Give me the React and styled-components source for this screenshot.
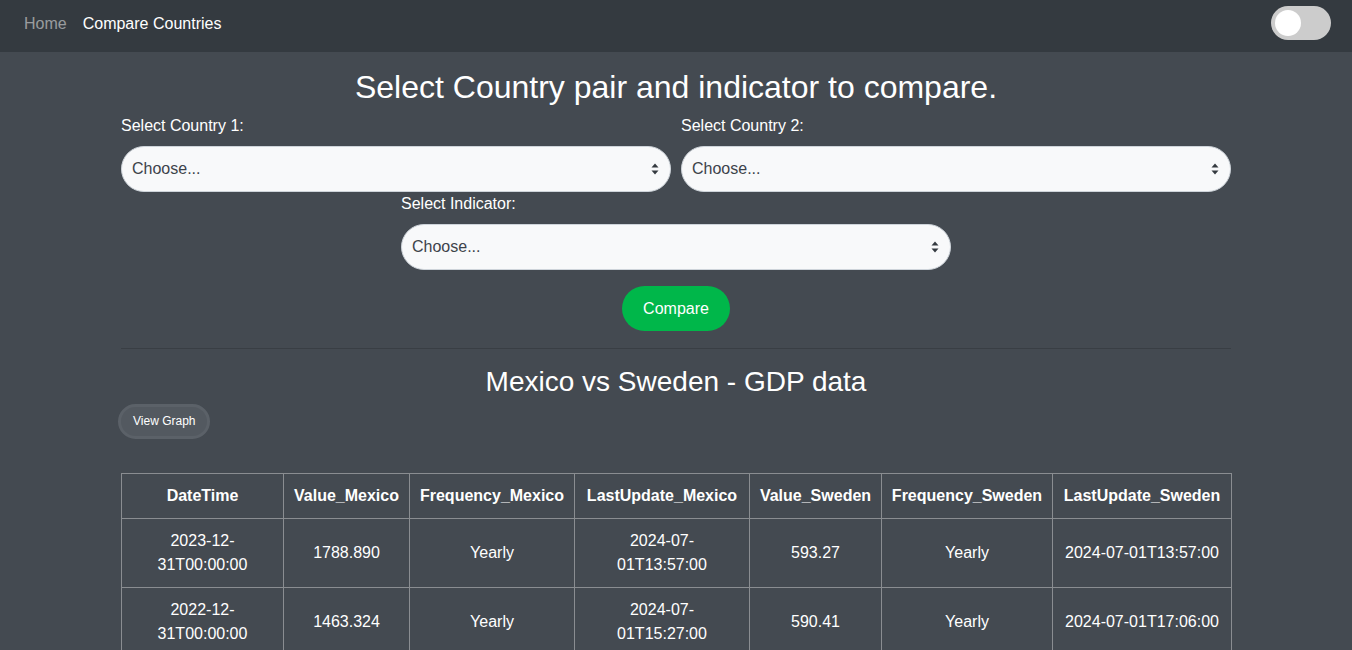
import styled, { createGlobalStyle } from "styled-components"

const GlobalStyle = createGlobalStyle`
    * {
        box-sizing: border-box;
    }

    body {
        margin: 0;
        background-color: #444a51;
        font-family: "Liberation Sans", Arial, sans-serif;
        color: #ffffff;
        font-size: 16px;
        line-height: 1.5;
    }
`

const Navbar = styled.nav`
    display: flex;
    justify-content: space-between;
    align-items: center;
    height: 52px;
    padding: 0 21px 6px 24px;
    background-color: #343a40;
`

const NavLinks = styled.div`
    display: flex;
    align-items: center;
    gap: 16px;
    padding-top: 2px;
`

const NavLink = styled.a`
    font-size: 16px;
    text-decoration: none;
    color: ${(p) => (p.$active ? "#ffffff" : "rgba(255, 255, 255, 0.5)")};
    cursor: pointer;
`

const Switch = styled.label`
    display: flex;
    align-items: center;
    width: 60px;
    height: 34px;
    padding: 4px;
    border-radius: 34px;
    background-color: #cccccc;
    cursor: pointer;

    &::before {
        content: "";
        width: 26px;
        height: 26px;
        border-radius: 50%;
        background-color: #ffffff;
    }
`

const Container = styled.main`
    width: 1110px;
    margin: 0 auto;
    padding-top: 16px;
`

const Title = styled.h1`
    margin: 0 0 ${(p) => p.$gap ?? 8}px;
    font-size: ${(p) => p.$size || 32}px;
    font-weight: 400;
    line-height: 1.2;
    text-align: center;
`

const FieldGrid = styled.div`
    display: grid;
    grid-template-columns: 1fr 1fr;
    column-gap: 10px;
`

const Field = styled.div`
    display: flex;
    flex-direction: column;
    width: ${(p) => (p.$width ? `${p.$width}px` : "auto")};
    margin: ${(p) => (p.$centered ? "0 auto" : "0")};
`

const Label = styled.label`
    margin-bottom: 8px;
    font-size: 16px;
`

const SelectWrap = styled.div`
    position: relative;
`

const Select = styled.select`
    width: 100%;
    height: 46px;
    padding: 0 36px 2px 10px;
    border: 1px solid #ced4da;
    border-radius: 23px;
    background-color: #f8f9fa;
    color: #3d434a;
    font-family: inherit;
    font-size: 16px;
    appearance: none;
    outline: none;
`

const SelectArrows = styled.svg`
    position: absolute;
    right: 12px;
    top: 50%;
    width: 8px;
    height: 12px;
    transform: translateY(-50%);
    pointer-events: none;
`

const ButtonRow = styled.div`
    display: flex;
    justify-content: ${(p) => p.$align || "center"};
    margin-top: ${(p) => p.$top || 0}px;
`

const CompareButton = styled.button`
    height: 45px;
    padding: 0 21px;
    border: none;
    border-radius: 23px;
    background-color: #00b74a;
    color: #ffffff;
    font-family: inherit;
    font-size: 16px;
    cursor: pointer;
`

const Divider = styled.hr`
    margin: 17px 0 16px;
    border: 0;
    border-top: 1px solid #393e44;
`

const GraphButton = styled.button`
    height: 35px;
    margin-left: -3px;
    padding: 0 12px;
    border: 3px solid #5b6168;
    border-radius: 18px;
    background-color: #535960;
    color: #ffffff;
    font-family: inherit;
    font-size: 12px;
    cursor: pointer;
`

const Table = styled.table`
    width: 100%;
    margin-top: 34px;
    border-collapse: collapse;
    table-layout: fixed;
    text-align: center;
`

const HeadCell = styled.th`
    padding: 10px 4px;
    border: 1px solid #8a8d91;
    font-weight: 700;
    white-space: nowrap;
`

const Cell = styled.td`
    padding: 10px ${(p) => p.$pad || 8}px;
    border: 1px solid #8a8d91;
`

const columns = [
    { name: "DateTime", width: 162 },
    { name: "Value_Mexico", width: 126 },
    { name: "Frequency_Mexico", width: 165 },
    { name: "LastUpdate_Mexico", width: 175, pad: 12 },
    { name: "Value_Sweden", width: 132 },
    { name: "Frequency_Sweden", width: 171 },
    { name: "LastUpdate_Sweden", width: 179 },
]

const rows = [
    ["2023-12-31T00:00:00", "1788.890", "Yearly", "2024-07-01T13:57:00", "593.27", "Yearly", "2024-07-01T13:57:00"],
    ["2022-12-31T00:00:00", "1463.324", "Yearly", "2024-07-01T15:27:00", "590.41", "Yearly", "2024-07-01T17:06:00"],
]

const CountrySelect = ({ label, width, centered }) => (
    <Field $width={width} $centered={centered}>
        <Label>{label}</Label>
        <SelectWrap>
            <Select defaultValue="">
                <option value="">Choose...</option>
            </Select>
            <SelectArrows viewBox="0 0 8 12">
                <path d="M4 0.5 L7.5 4.5 H0.5 Z" fill="#343a40" />
                <path d="M4 11.5 L7.5 7.5 H0.5 Z" fill="#343a40" />
            </SelectArrows>
        </SelectWrap>
    </Field>
)

const App = () => {
    return (
        <>
            <GlobalStyle />
            <Navbar>
                <NavLinks>
                    <NavLink>Home</NavLink>
                    <NavLink $active>Compare Countries</NavLink>
                </NavLinks>
                <Switch />
            </Navbar>
            <Container>
                <Title>Select Country pair and indicator to compare.</Title>
                <FieldGrid>
                    <CountrySelect label="Select Country 1:" />
                    <CountrySelect label="Select Country 2:" />
                </FieldGrid>
                <CountrySelect label="Select Indicator:" width={550} centered />
                <ButtonRow $top={16}>
                    <CompareButton>Compare</CompareButton>
                </ButtonRow>
                <Divider />
                <Title $size={28} $gap={5}>
                    Mexico vs Sweden - GDP data
                </Title>
                <ButtonRow $align="flex-start">
                    <GraphButton>View Graph</GraphButton>
                </ButtonRow>
                <Table>
                    <colgroup>
                        {columns.map((c) => (
                            <col key={c.name} style={{ width: c.width }} />
                        ))}
                    </colgroup>
                    <thead>
                        <tr>
                            {columns.map((c) => (
                                <HeadCell key={c.name}>{c.name}</HeadCell>
                            ))}
                        </tr>
                    </thead>
                    <tbody>
                        {rows.map((row, i) => (
                            <tr key={i}>
                                {row.map((value, j) => (
                                    <Cell key={j} $pad={columns[j].pad}>
                                        {value}
                                    </Cell>
                                ))}
                            </tr>
                        ))}
                    </tbody>
                </Table>
            </Container>
        </>
    )
}

export default App
